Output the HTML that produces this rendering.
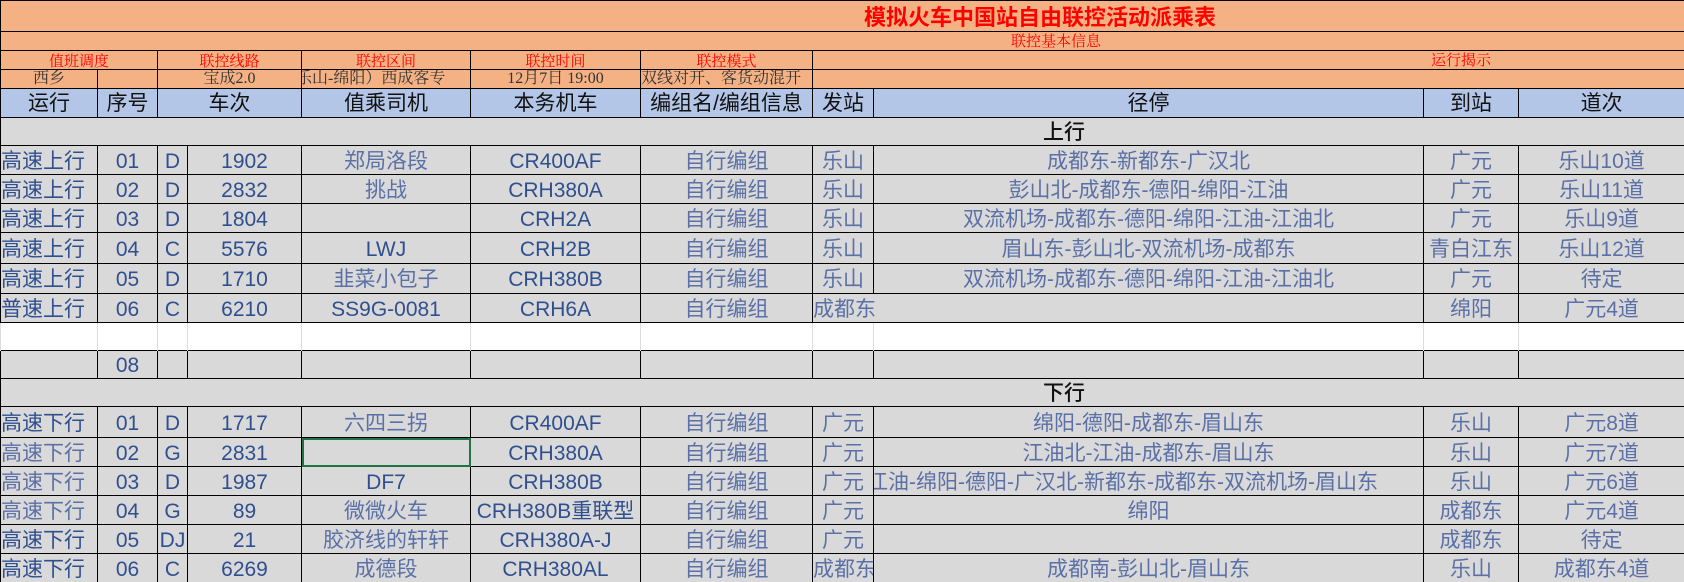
<!DOCTYPE html>
<html><head><meta charset="utf-8">
<style>
*{margin:0;padding:0;box-sizing:border-box}
html,body{width:1684px;height:582px;overflow:hidden;background:#fff}
body{position:relative;font-family:"Liberation Sans","Noto Sans CJK SC",sans-serif}
table{position:absolute;left:0;top:0;border-collapse:collapse;table-layout:fixed;width:1684px}
td{border:1.5px solid #000;white-space:nowrap;overflow:hidden;text-align:center;padding:0;line-height:1}
.or td{background:#f4b183}
.hd td{background:#b4c6e7;font-size:21px;color:#111}
.dt td{background:#d9d9d9;font-size:21px;color:#2f4f8f;padding-top:2px}
.lt{color:#5a70a6 !important}
.lft{text-align:left !important}
.sec td{background:#d9d9d9;font-size:20px;color:#111}
.blank td{background:#fff;border-top:none;border-bottom:none;border-left:1px solid #dcdcdc;border-right:1px solid #dcdcdc}
.lab{font-family:"Noto Serif CJK SC",serif;color:#f00;font-size:15px}
.val{font-family:"Liberation Serif","Noto Serif CJK SC",serif;color:#333;font-size:16px}
.abs{position:absolute;white-space:nowrap;line-height:1}
.sel{outline:2px solid #217346;outline-offset:-2px}
</style></head><body>
<table>
<colgroup>
<col style="width:97px"><col style="width:60px"><col style="width:30px"><col style="width:114px"><col style="width:169px"><col style="width:170px"><col style="width:172px"><col style="width:61px"><col style="width:550px"><col style="width:95px"><col style="width:166px">
</colgroup>
<tr class="or" style="height:31px"><td colspan="11"></td></tr>
<tr class="or" style="height:19px"><td colspan="11"></td></tr>
<tr class="or" style="height:19px"><td colspan="2" class="lab">值班调度</td><td colspan="2" class="lab">联控线路</td><td class="lab">联控区间</td><td class="lab">联控时间</td><td class="lab">联控模式</td><td colspan="4"></td></tr>
<tr class="or" style="height:19px"><td class="val">西乡</td><td></td><td colspan="2" class="val">宝成2.0</td><td class="val" style="text-align:left;text-indent:-6px">乐山-绵阳）西成客专</td><td class="val">12月7日 19:00</td><td class="val lft">双线对开、客货动混开</td><td colspan="4"></td></tr>
<tr class="hd" style="height:29px"><td>运行</td><td>序号</td><td colspan="2">车次</td><td>值乘司机</td><td>本务机车</td><td>编组名/编组信息</td><td>发站</td><td>径停</td><td>到站</td><td>道次</td></tr>
<tr class="sec" style="height:28px"><td colspan="11"></td></tr>
<tr class="dt" style="height:29px"><td class="lft">高速上行</td><td>01</td><td>D</td><td>1902</td><td class="lt">郑局洛段</td><td>CR400AF</td><td class="lt">自行编组</td><td class="lt">乐山</td><td class="lt">成都东-新都东-广汉北</td><td class="lt">广元</td><td class="lt">乐山10道</td></tr>
<tr class="dt" style="height:29px"><td class="lft">高速上行</td><td>02</td><td>D</td><td>2832</td><td class="lt">挑战</td><td>CRH380A</td><td class="lt">自行编组</td><td class="lt">乐山</td><td class="lt">彭山北-成都东-德阳-绵阳-江油</td><td class="lt">广元</td><td class="lt">乐山11道</td></tr>
<tr class="dt" style="height:29px"><td class="lft">高速上行</td><td>03</td><td>D</td><td>1804</td><td></td><td>CRH2A</td><td class="lt">自行编组</td><td class="lt">乐山</td><td class="lt">双流机场-成都东-德阳-绵阳-江油-江油北</td><td class="lt">广元</td><td class="lt">乐山9道</td></tr>
<tr class="dt" style="height:31px"><td class="lft">高速上行</td><td>04</td><td>C</td><td>5576</td><td>LWJ</td><td>CRH2B</td><td class="lt">自行编组</td><td class="lt">乐山</td><td class="lt">眉山东-彭山北-双流机场-成都东</td><td class="lt">青白江东</td><td class="lt">乐山12道</td></tr>
<tr class="dt" style="height:30px"><td class="lft">高速上行</td><td>05</td><td>D</td><td>1710</td><td class="lt">韭菜小包子</td><td>CRH380B</td><td class="lt">自行编组</td><td class="lt">乐山</td><td class="lt">双流机场-成都东-德阳-绵阳-江油-江油北</td><td class="lt">广元</td><td class="lt">待定</td></tr>
<tr class="dt" style="height:29px"><td class="lft">普速上行</td><td>06</td><td>C</td><td>6210</td><td>SS9G-0081</td><td>CRH6A</td><td class="lt">自行编组</td><td colspan="2" class="lt lft">成都东</td><td class="lt">绵阳</td><td class="lt">广元4道</td></tr>
<tr class="blank" style="height:28px"><td></td><td></td><td></td><td></td><td></td><td></td><td></td><td></td><td></td><td></td><td></td></tr>
<tr class="dt" style="height:28px"><td></td><td>08</td><td></td><td></td><td></td><td></td><td></td><td></td><td></td><td></td><td></td></tr>
<tr class="sec" style="height:28px"><td colspan="11"></td></tr>
<tr class="dt" style="height:31px"><td class="lft">高速下行</td><td>01</td><td>D</td><td>1717</td><td class="lt">六四三拐</td><td>CR400AF</td><td class="lt">自行编组</td><td class="lt">广元</td><td class="lt">绵阳-德阳-成都东-眉山东</td><td class="lt">乐山</td><td class="lt">广元8道</td></tr>
<tr class="dt" style="height:29px"><td class="lft lt">高速下行</td><td>02</td><td>G</td><td>2831</td><td class="sel"></td><td>CRH380A</td><td class="lt">自行编组</td><td class="lt">广元</td><td class="lt">江油北-江油-成都东-眉山东</td><td class="lt">乐山</td><td class="lt">广元7道</td></tr>
<tr class="dt" style="height:29px"><td class="lft lt">高速下行</td><td>03</td><td>D</td><td>1987</td><td>DF7</td><td>CRH380B</td><td class="lt">自行编组</td><td class="lt">广元</td><td class="lt" style="text-align:left;text-indent:-7px">江油-绵阳-德阳-广汉北-新都东-成都东-双流机场-眉山东</td><td class="lt">乐山</td><td class="lt">广元6道</td></tr>
<tr class="dt" style="height:29px"><td class="lft lt">高速下行</td><td>04</td><td>G</td><td>89</td><td class="lt">微微火车</td><td>CRH380B重联型</td><td class="lt">自行编组</td><td class="lt">广元</td><td class="lt">绵阳</td><td class="lt">成都东</td><td class="lt">广元4道</td></tr>
<tr class="dt" style="height:29px"><td class="lft">高速下行</td><td>05</td><td>DJ</td><td>21</td><td class="lt">胶济线的轩轩</td><td>CRH380A-J</td><td class="lt">自行编组</td><td class="lt">广元</td><td></td><td class="lt">成都东</td><td class="lt">待定</td></tr>
<tr class="dt" style="height:29px"><td class="lft">高速下行</td><td>06</td><td>C</td><td>6269</td><td class="lt">成德段</td><td>CRH380AL</td><td class="lt">自行编组</td><td class="lt lft">成都东</td><td class="lt">成都南-彭山北-眉山东</td><td class="lt">乐山</td><td class="lt">成都东4道</td></tr>
</table>
<div class="abs" style="left:864px;top:5px;font-size:22px;font-weight:bold;color:#f00;font-family:'Noto Sans CJK SC',sans-serif">模拟火车中国站自由联控活动派乘表</div>
<div class="abs lab" style="left:1011px;top:33px">联控基本信息</div>
<div class="abs lab" style="left:1431px;top:52px">运行揭示</div>
<div class="abs" style="left:1043px;top:121px;font-size:21px;color:#111;font-family:'Noto Sans CJK SC',sans-serif;font-weight:500">上行</div>
<div class="abs" style="left:1043px;top:382px;font-size:21px;color:#111;font-family:'Noto Sans CJK SC',sans-serif;font-weight:500">下行</div>
</body></html>
